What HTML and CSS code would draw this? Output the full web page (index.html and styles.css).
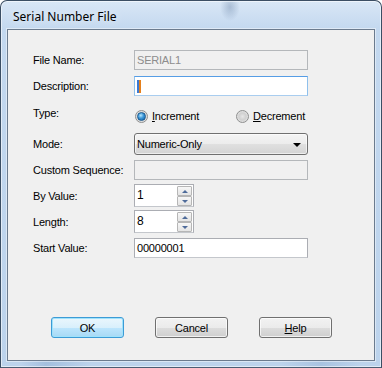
FILE: index.html
```html
<!DOCTYPE html>
<html lang="en">
<head>
    <meta charset="UTF-8">
    <title>Serial Number File</title>
    <link rel="stylesheet" href="styles.css">
</head>
<body>
    <div class="window">
        <div class="titlebar">
            <span class="title">Serial Number File</span>
        </div>
        <div class="client">
            <div class="fields">
                <div class="field">
                    <label>File Name:</label>
                    <div class="edit disabled">SERIAL1</div>
                </div>
                <div class="field">
                    <label>Description:</label>
                    <div class="edit focused"><span class="caret"></span></div>
                </div>
                <div class="field field-type">
                    <label>Type:</label>
                    <div class="options">
                        <div class="option"><span class="radio checked"></span><span><u>I</u>ncrement</span></div>
                        <div class="option"><span class="radio"></span><span><u>D</u>ecrement</span></div>
                    </div>
                </div>
                <div class="field field-mode">
                    <label>Mode:</label>
                    <div class="combo">
                        <span>Numeric-Only</span>
                        <span class="combo-arrow"></span>
                    </div>
                </div>
                <div class="field field-custom">
                    <label>Custom Sequence:</label>
                    <div class="edit disabled"></div>
                </div>
                <div class="field field-spin">
                    <label>By Value:</label>
                    <div class="spin">
                        <span class="spin-value">1</span>
                        <div class="spin-buttons">
                            <span class="spin-btn up"></span>
                            <span class="spin-btn down"></span>
                        </div>
                    </div>
                </div>
                <div class="field field-spin field-length">
                    <label>Length:</label>
                    <div class="spin">
                        <span class="spin-value">8</span>
                        <div class="spin-buttons">
                            <span class="spin-btn up"></span>
                            <span class="spin-btn down"></span>
                        </div>
                    </div>
                </div>
                <div class="field field-start">
                    <label>Start Value:</label>
                    <div class="edit">00000001</div>
                </div>
            </div>

            <div class="buttons">
                <button class="btn btn-default">OK</button>
                <button class="btn">Cancel</button>
                <button class="btn"><u>H</u>elp</button>
            </div>
        </div>
    </div>
</body>
</html>
```

FILE: styles.css
```css
* {
    margin: 0;
    padding: 0;
    box-sizing: border-box;
}

body {
    background: #fff;
    font-family: "Liberation Sans", Arial, sans-serif;
    font-size: 11px;
    letter-spacing: -0.2px;
    color: #000;
}

/* Window frame */
.window {
    width: 382px;
    height: 368px;
    border: 1px solid #3b4e64;
    border-bottom-color: #4a5d73;
    border-radius: 7px 7px 0 0;
    padding: 0 6px 6px;
    display: flex;
    flex-direction: column;
    background:
        radial-gradient(ellipse 10px 14px at 229px 6px, rgba(70, 100, 140, 0.3), transparent),
        linear-gradient(to right, transparent 20px, rgba(90, 130, 180, 0.25) 45px, transparent 90px, transparent 280px, rgba(90, 130, 180, 0.2) 320px, transparent 360px) bottom / 100% 7px no-repeat,
        linear-gradient(to bottom, #d9e7f6 0, #c3d8ef 28px, #bcd3ec 100%);
    box-shadow: inset 0 0 0 1px rgba(255, 255, 255, 0.55);
}

.titlebar {
    height: 28px;
    display: flex;
    align-items: center;
    padding: 2px 0 0 6px;
}

.title {
    font-family: "Noto Sans", "Open Sans", sans-serif;
    font-size: 12px;
    letter-spacing: 0;
    color: #000;
    text-shadow: 0 0 8px rgba(255, 255, 255, 0.9);
}

.client {
    height: 332px;
    border: 1px solid #6b7b8e;
    background: #f0f0f0;
    padding: 20px 0 0 25px;
    box-shadow: 0 0 0 1px rgba(255, 255, 255, 0.45);
}

/* Form rows */
.field {
    display: flex;
    align-items: center;
    height: 20px;
    margin-top: 6px;
}

.field:first-child { margin-top: 0; }
.field-type { margin-top: 10px; }
.field-mode { height: 22px; margin-top: 7px; }
.field-custom { margin-top: 5px; }
.field-spin { height: 23px; margin-top: 4px; }
.field-length { margin-top: 3px; }
.field-start { margin-top: 5px; }

.field label {
    width: 101px;
}

.field-type label {
    padding-bottom: 6px;
}

.edit {
    width: 174px;
    height: 20px;
    border: 1px solid #abadb3;
    border-bottom-color: #c4c7cc;
    background: #fff;
    padding-left: 2px;
    display: flex;
    align-items: center;
}

.edit.disabled {
    background: #f0f0f0;
    border-color: #b4b7ba;
    color: #8d8d8d;
}

.edit.focused {
    border-color: #569de5 #8fc0ec #a9cdef #8fc0ec;
}

.caret {
    width: 4px;
    height: 13px;
    background: linear-gradient(to right, #3b7ad4 50%, #e5801c 50%);
}

/* Radio buttons */
.options {
    display: flex;
    padding-left: 1px;
}

.option {
    width: 101px;
    display: flex;
    align-items: center;
    gap: 4px;
}

.radio {
    width: 13px;
    height: 13px;
    border-radius: 50%;
    border: 1px solid #8e8f8f;
    background: radial-gradient(circle at 50% 50%, #e6e6e6 0, #d0d0d0 45%, #f4f4f4 100%);
    display: flex;
    align-items: center;
    justify-content: center;
}

.radio.checked::after {
    content: '';
    width: 7px;
    height: 7px;
    border-radius: 50%;
    border: 1px solid #1c5c92;
    background: radial-gradient(circle at 40% 35%, #b6e6fd 0, #3c97d8 45%, #0d5aa0 100%);
}

/* Combobox */
.combo {
    width: 174px;
    height: 22px;
    border: 1px solid #707070;
    border-radius: 3px;
    background: linear-gradient(to bottom, #f4f4f4 0, #ececec 50%, #e0e0e0 50%, #d4d4d4 100%);
    box-shadow: inset 0 0 0 1px rgba(255, 255, 255, 0.6);
    display: flex;
    align-items: center;
    justify-content: space-between;
    padding: 0 6px 0 2px;
}

.combo-arrow {
    width: 0;
    height: 0;
    border-left: 4px solid transparent;
    border-right: 4px solid transparent;
    border-top: 4px solid #000;
    margin-top: 1px;
}

/* Spin boxes */
.spin {
    width: 60px;
    height: 23px;
    border: 1px solid #abadb3;
    border-bottom-color: #c4c7cc;
    background: #fff;
    display: flex;
    padding: 1px 1px 0 2px;
}

.spin-value {
    flex: 1;
    display: flex;
    align-items: center;
    margin-top: -3px;
    font-size: 12px;
}

.spin-buttons {
    display: flex;
    flex-direction: column;
}

.spin-btn {
    width: 15px;
    height: 10px;
    border: 1px solid #b6b6b6;
    border-radius: 1px;
    background: linear-gradient(to bottom, #f7f7f7, #e4e4e4);
    display: flex;
    align-items: center;
    justify-content: center;
}

.spin-btn::after {
    content: '';
    width: 0;
    height: 0;
    border-left: 3px solid transparent;
    border-right: 3px solid transparent;
}

.spin-btn.up::after { border-bottom: 3px solid #4e6b9a; }
.spin-btn.down::after { border-top: 3px solid #4e6b9a; }

/* Dialog buttons */
.buttons {
    display: flex;
    gap: 31px;
    margin-top: 59px;
    padding-left: 18px;
}

.btn {
    width: 73px;
    height: 21px;
    border: 1px solid #707070;
    border-radius: 3px;
    font-family: "Liberation Sans", Arial, sans-serif;
    font-size: 11px;
    letter-spacing: -0.2px;
    color: #000;
    background: linear-gradient(to bottom, #f2f2f2 0, #ebebeb 50%, #dddddd 50%, #cfcfcf 100%);
    box-shadow: inset 0 0 0 1px rgba(255, 255, 255, 0.7);
}

.btn-default {
    border-color: #3c9bd6;
    background: linear-gradient(to bottom, #eaf6fd 0, #d9f0fc 50%, #bee6fd 50%, #a7d9f5 100%);
    box-shadow: inset 0 0 0 1px #9fe2fb;
}
```
